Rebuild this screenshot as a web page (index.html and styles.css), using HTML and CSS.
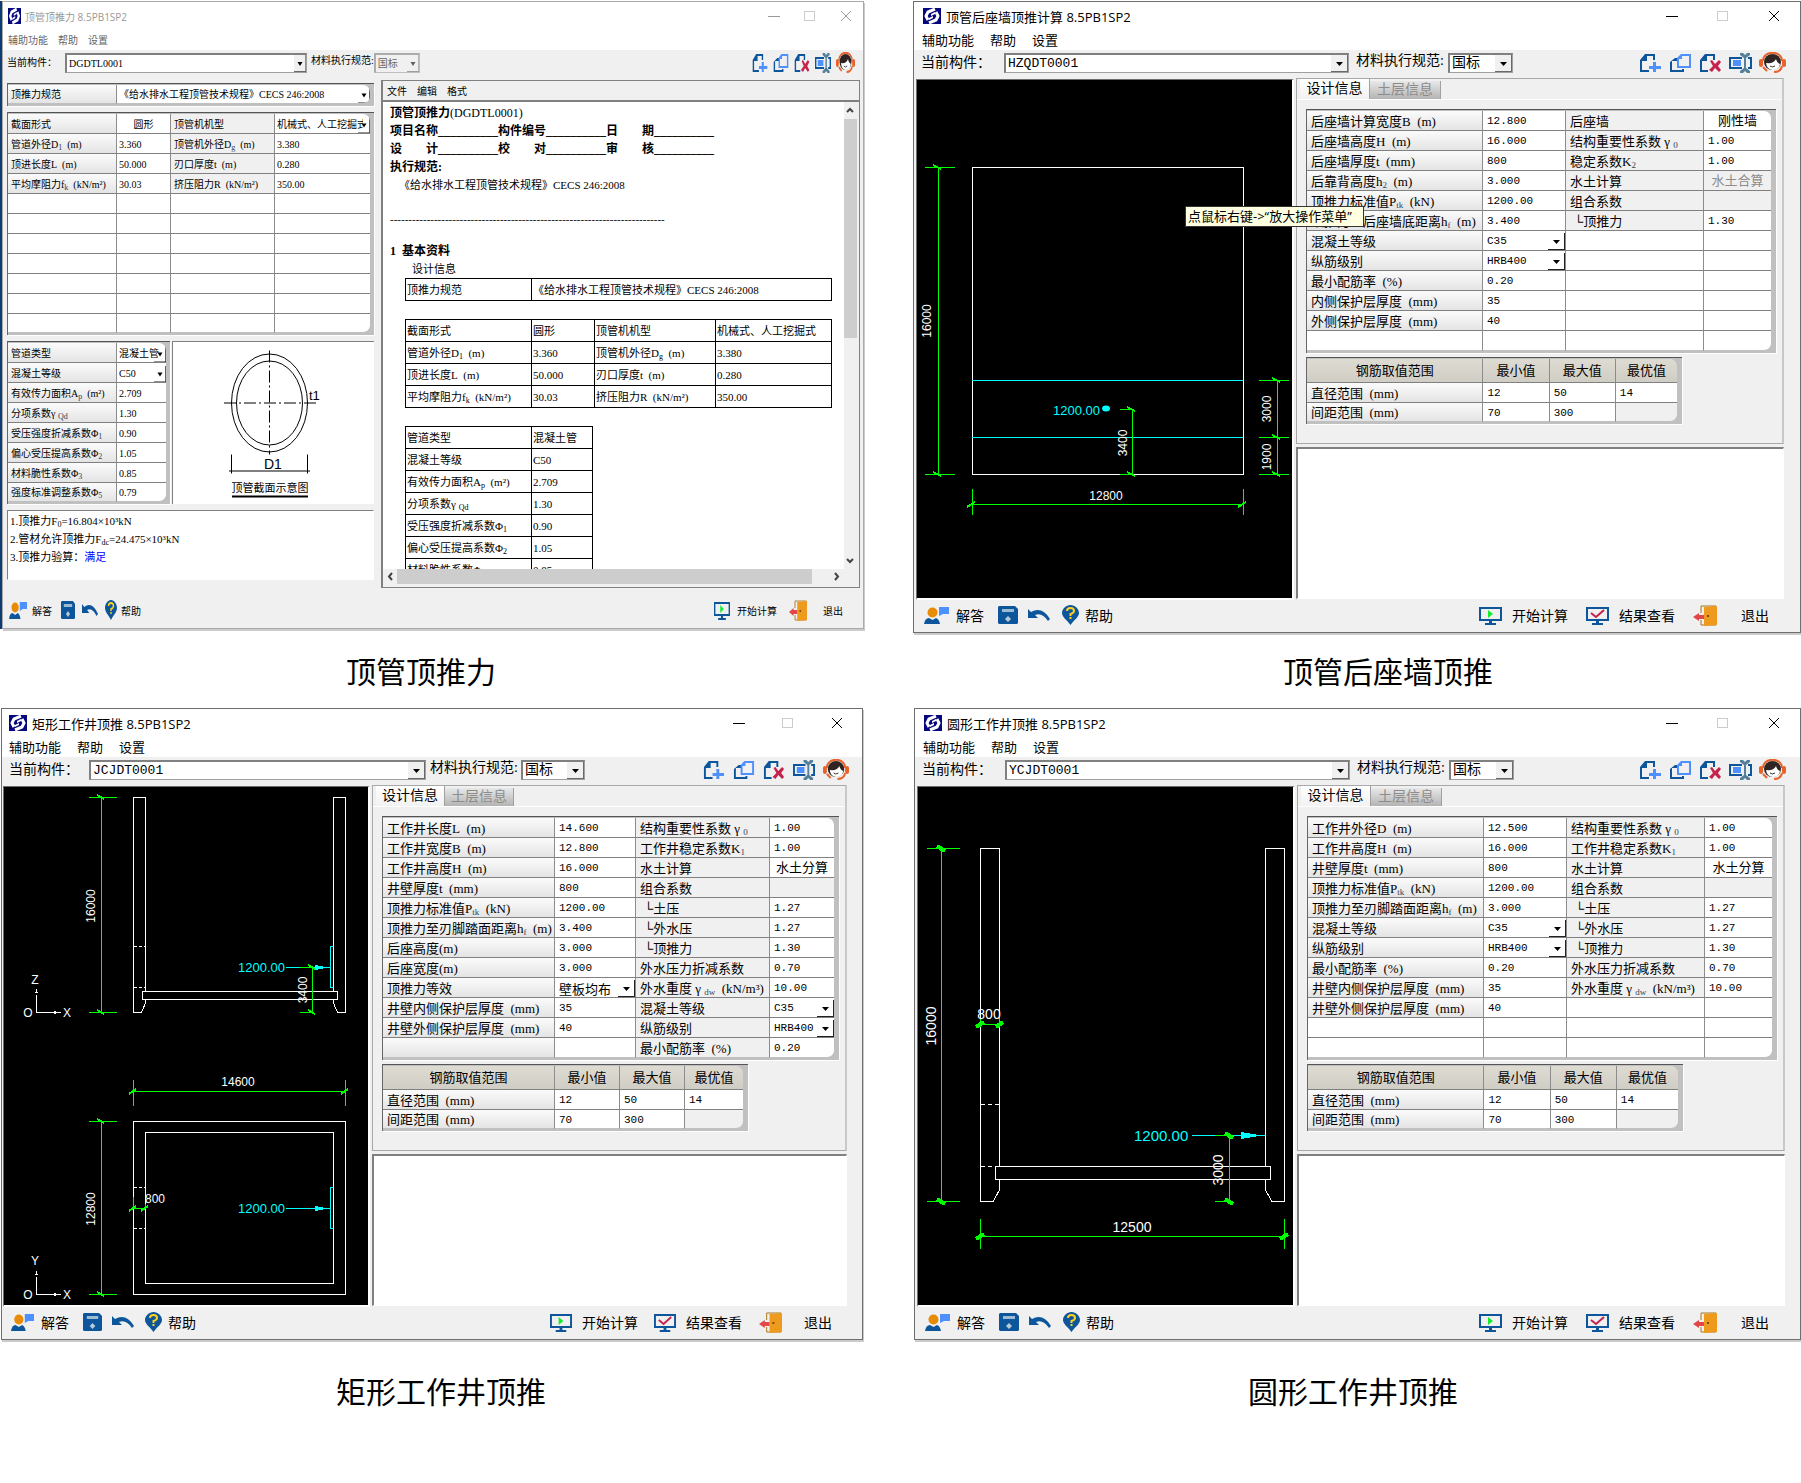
FILE: index.html
```html
<!DOCTYPE html>
<html lang="zh-CN">
<head>
<meta charset="utf-8">
<title>顶管顶推计算</title>
<link rel="stylesheet" href="styles.css">
</head>
<body>
<svg class="sprite" aria-hidden="true">
  <symbol id="logo" viewBox="0 0 18 16" preserveAspectRatio="none"><rect width="18" height="16" fill="#06067e"/><path d="M12 1L5 4L3 8L5 12M6 15L13 12L15 8L13 4" fill="none" stroke="#fff" stroke-width="3"/><path d="M12 4L8 6V8L12 6ZM10 8L6 10V12L10 10Z" fill="#fff"/></symbol>
  <symbol id="add" viewBox="0 0 23 20" preserveAspectRatio="none"><path d="M6 1H16V7H14V3H8V8H3V17H10V19H1V7Z" fill="#0d569c"/><path d="M14 9H17V13H22V16H17V19H14V16H10V13H14Z" fill="#4d90fe"/></symbol>
  <symbol id="copy" viewBox="0 0 23 20" preserveAspectRatio="none"><path d="M6 5H9V8H3V17H13V16H15V19H1V9Z" fill="#0d569c"/><path d="M12 1H22V15H8V5Z M13 3V6H10V13H20V3Z" fill="#4d90fe" fill-rule="evenodd"/></symbol>
  <symbol id="del" viewBox="0 0 23 20" preserveAspectRatio="none"><path d="M6 1H16V7H14V3H8V8H3V17H9V19H1V7Z" fill="#0d569c"/><path d="M11 8L13 7L16 11L20 7L22 9L19 13L22 17L20 19L16 15L13 19L10 17L14 13Z" fill="#c5224c"/></symbol>
  <symbol id="rename" viewBox="0 0 23 20" preserveAspectRatio="none"><path d="M0 4H13V6H2V14H13V16H0Z M19 4H23V16H19V14H21V6H19Z" fill="#0d569c"/><rect x="4" y="7" width="8" height="6" fill="#4d90fe"/><path d="M11 0H14L16 2L18 0H21V2L17 5V15L21 18V20H18L16 18L14 20H11V18L15 15V5L11 2Z" fill="#54809a"/></symbol>
  <symbol id="service" viewBox="0 0 27 21" preserveAspectRatio="none"><path d="M4 9C4 -2 23 -2 23 9" fill="none" stroke="#e8622a" stroke-width="2"/><rect x="0" y="7" width="4" height="8" rx="2" fill="#e8622a"/><rect x="23" y="7" width="4" height="8" rx="2" fill="#e8622a"/><ellipse cx="13.500" cy="10" rx="8.500" ry="8" fill="#2e2523"/><path d="M7 11Q15 12 17 7Q18 11 21 12Q20 18 14 18Q8 18 7 11Z" fill="#fff"/><path d="M11 14Q13 16 16 14" stroke="#333" fill="none"/><path d="M23 14Q22 20 15 20" fill="none" stroke="#e8622a" stroke-width="2"/><path d="M4 15L8 19" stroke="#e8622a" stroke-width="2"/></symbol>
  <symbol id="ask" viewBox="0 0 25 18" preserveAspectRatio="none"><circle cx="8.500" cy="6.500" r="5" fill="#e88b05"/><path d="M0 18Q1 12 5 12L8.500 14L12 12Q15 13 16 18Z" fill="#0d569c"/><path d="M15 1H25V8H19L15 10Z" fill="#4d90fe"/></symbol>
  <symbol id="save" viewBox="0 0 20 18" preserveAspectRatio="none"><path d="M1 0H17L20 3V17L19 18H1L0 17V1Z" fill="#0d569c"/><rect x="4" y="3" width="12" height="3" fill="#9dbbd2"/><path d="M10 10L13 13L10 16L7 13Z" fill="#b9cbd8"/></symbol>
  <symbol id="undo" viewBox="0 0 22 14" preserveAspectRatio="none"><path d="M0 1L3 4Q14 -2 22 11L20 13Q14 4 7 7L10 10H0Z" fill="#0d569c"/></symbol>
  <symbol id="help" viewBox="0 0 17 20" preserveAspectRatio="none"><path d="M8.500 0C13 0 17 4 17 8C17 12 12 15 8.500 20C5 15 0 12 0 8C0 4 4 0 8.500 0Z" fill="#0d569c"/><path d="M5 6Q5 3 8.500 3Q12 3 12 6Q12 8 8.500 9V11" fill="none" stroke="#ffd21c" stroke-width="2"/><rect x="7.500" y="12" width="2" height="2" fill="#ffd21c"/></symbol>
  <symbol id="run" viewBox="0 0 23 19" preserveAspectRatio="none"><path d="M0 1H23V15H0Z M2 3V13H21V3Z M10 15H13V17H17V19H6V17H10Z" fill="#0d569c" fill-rule="evenodd"/><path d="M9 4L14 8L9 12Z" fill="#12ec2e"/></symbol>
  <symbol id="view" viewBox="0 0 23 19" preserveAspectRatio="none"><path d="M0 1H23V15H0Z M2 3V13H21V3Z M10 15H13V17H17V19H6V17H10Z" fill="#0d569c" fill-rule="evenodd"/><path d="M5 7L10 11L18 4" fill="none" stroke="#c5224c" stroke-width="2"/></symbol>
  <symbol id="exit" viewBox="0 0 24 21" preserveAspectRatio="none"><path d="M8 8V1H23V20H8V15" fill="none" stroke="#a8741c" stroke-width="1"/><path d="M11 2L24 1V20L11 21Z" fill="#ee9a1c"/><rect x="14" y="10" width="2" height="2" fill="#7c4a06"/><path d="M0 12L6 8V10H11V14H6V16Z" fill="#e24646"/></symbol>
  <symbol id="wmin" viewBox="0 0 12 12"><path d="M0 6.500H12" stroke="currentColor"/></symbol>
  <symbol id="wmax" viewBox="0 0 12 12"><rect x="0.500" y="1.500" width="10" height="9" fill="none" stroke="#ccc"/></symbol>
  <symbol id="wclose" viewBox="0 0 12 12"><path d="M1 1L11 11M11 1L1 11" stroke="currentColor"/></symbol>
</svg>

<main class="board">
  <figure class="shot">
    <section class="window narrow inactive">
      <header class="titlebar"><svg class="logo"><use href="#logo"/></svg><h2>顶管顶推力 8.5PB1SP2</h2>
        <div class="winbtns"><button aria-label="最小化"><svg><use href="#wmin"/></svg></button><button aria-label="最大化"><svg><use href="#wmax"/></svg></button><button aria-label="关闭"><svg><use href="#wclose"/></svg></button></div></header>
      <nav class="menu"><button>辅助功能</button><button>帮助</button><button>设置</button></nav>
      <div class="toolbar"><label for="m1">当前构件：</label><select id="m1" class="combo member"><option>DGDTL0001</option></select>
        <label for="s1" class="std">材料执行规范:</label><select id="s1" class="combo code" disabled><option>国标</option></select>
        <div class="tools"><button aria-label="新建"><svg><use href="#add"/></svg></button><button aria-label="复制"><svg><use href="#copy"/></svg></button><button aria-label="删除"><svg><use href="#del"/></svg></button><button aria-label="重命名"><svg><use href="#rename"/></svg></button><button aria-label="客服" class="svc"><svg><use href="#service"/></svg></button></div></div>
      <div class="body split">
        <div class="inputs">
          <div class="gridbox"><table class="cells"><colgroup><col class="n-label"><col class="n-wide"></colgroup>
            <tr><th>顶推力规范</th><td><select aria-label="顶推力规范"><option>《给水排水工程顶管技术规程》CECS 246:2008</option></select></td></tr></table></div>
          <div class="gridbox"><table class="cells"><colgroup><col class="n-label"><col class="n-val"><col class="n-label2"><col class="n-val2"></colgroup>
            <tr><th>截面形式</th><td class="mid">圆形</td><th class="flat">顶管机机型</th><td><select aria-label="顶管机机型"><option>机械式、人工挖掘式</option></select></td></tr>
            <tr><th>管道外径D<sub>1</sub>&nbsp; (m)</th><td>3.360</td><th class="flat">顶管机外径D<sub>g</sub>&nbsp; (m)</th><td>3.380</td></tr>
            <tr><th>顶进长度L&nbsp; (m)</th><td>50.000</td><th class="flat">刃口厚度t&nbsp; (m)</th><td>0.280</td></tr>
            <tr><th>平均摩阻力f<sub>k</sub>&nbsp; (kN/m²)</th><td>30.03</td><th class="flat">挤压阻力R&nbsp; (kN/m²)</th><td>350.00</td></tr>
            <tr><td></td><td></td><td></td><td></td></tr><tr><td></td><td></td><td></td><td></td></tr><tr><td></td><td></td><td></td><td></td></tr><tr><td></td><td></td><td></td><td></td></tr><tr><td></td><td></td><td></td><td></td></tr><tr><td></td><td></td><td></td><td></td></tr><tr><td></td><td></td><td></td><td></td></tr></table></div>
          <div class="pipe">
            <div class="gridbox"><table class="cells"><colgroup><col class="n-label"><col class="n-short"></colgroup>
              <tr><th>管道类型</th><td><select aria-label="管道类型"><option>混凝土管</option></select></td></tr>
              <tr><th>混凝土等级</th><td><select aria-label="混凝土等级"><option>C50</option></select></td></tr>
              <tr><th>有效传力面积A<sub>p</sub>&nbsp; (m²)</th><td>2.709</td></tr>
              <tr><th>分项系数γ&nbsp;<sub>Qd</sub></th><td>1.30</td></tr>
              <tr><th>受压强度折减系数Φ<sub>1</sub></th><td>0.90</td></tr>
              <tr><th>偏心受压提高系数Φ<sub>2</sub></th><td>1.05</td></tr>
              <tr><th>材料脆性系数Φ<sub>3</sub></th><td>0.85</td></tr>
              <tr><th>强度标准调整系数Φ<sub>5</sub></th><td>0.79</td></tr></table></div>
            <svg class="section" viewBox="173 340 201 161">
              <g fill="none" stroke="#000"><ellipse cx="269.500" cy="400.500" rx="38" ry="49"/><ellipse cx="269.500" cy="400.500" rx="33" ry="42"/>
              <path d="M224 400.500H316M269.500 348V452" stroke-dasharray="12 3 2 3"/><path d="M231.500 452V471M307.500 452V471M229 468.500H310"/></g>
              <path d="M232 493H308V495H232Z"/>
              <text x="309" y="397" font-size="13">t1</text><text x="264" y="466" font-size="14">D1</text><text x="270" y="489" font-size="11" text-anchor="middle">顶管截面示意图</text>
            </svg>
          </div>
          <div class="result"><p>1.顶推力F<sub>0</sub>=16.804×10³kN</p><p>2.管材允许顶推力F<sub>dc</sub>=24.475×10³kN</p><p>3.顶推力验算：<a href="#s1">满足</a></p></div>
        </div>
        <div class="report">
          <nav class="menu"><button>文件</button><button>编辑</button><button>格式</button></nav>
          <div class="scroller">
            <article class="doc">
              <p><b>顶管顶推力</b><span class="big">(DGDTL0001)</span></p>
              <p><b>项目名称__________构件编号__________日　　期__________</b></p>
              <p><b>设　　计__________校　　对__________审　　核__________</b></p>
              <p><b>执行规范:</b></p>
              <p class="in1">《给水排水工程顶管技术规程》CECS 246:2008</p>
              <p class="rule">---------------------------------------------------------------------------</p>
              <h3>1&nbsp; 基本资料</h3>
              <p class="in2">设计信息</p>
              <table><colgroup><col class="r-label"><col></colgroup><tr><td>顶推力规范</td><td>《给水排水工程顶管技术规程》CECS 246:2008</td></tr></table>
              <table><colgroup><col class="r-label"><col class="r-val"><col class="r-label2"><col></colgroup>
                <tr><td>截面形式</td><td>圆形</td><td>顶管机机型</td><td>机械式、人工挖掘式</td></tr>
                <tr><td>管道外径D<sub>1</sub>&nbsp; (m)</td><td>3.360</td><td>顶管机外径D<sub>g</sub>&nbsp; (m)</td><td>3.380</td></tr>
                <tr><td>顶进长度L&nbsp; (m)</td><td>50.000</td><td>刃口厚度t&nbsp; (m)</td><td>0.280</td></tr>
                <tr><td>平均摩阻力f<sub>k</sub>&nbsp; (kN/m²)</td><td>30.03</td><td>挤压阻力R&nbsp; (kN/m²)</td><td>350.00</td></tr></table>
              <table class="half"><colgroup><col class="r-label"><col></colgroup>
                <tr><td>管道类型</td><td>混凝土管</td></tr><tr><td>混凝土等级</td><td>C50</td></tr><tr><td>有效传力面积A<sub>p</sub>&nbsp; (m²)</td><td>2.709</td></tr><tr><td>分项系数γ&nbsp;<sub>Qd</sub></td><td>1.30</td></tr><tr><td>受压强度折减系数Φ<sub>1</sub></td><td>0.90</td></tr><tr><td>偏心受压提高系数Φ<sub>2</sub></td><td>1.05</td></tr><tr><td>材料脆性系数Φ<sub>3</sub></td><td>0.85</td></tr></table>
            </article>
            <div class="vbar"><svg viewBox="0 0 12 17"><path d="M3 10L6 7L9 10" /></svg><i></i><svg viewBox="0 0 12 17"><path d="M3 7L6 10L9 7"/></svg></div>
            <div class="hbar"><svg viewBox="0 0 14 15"><path d="M9 4L6 7.500L9 11"/></svg><i></i><svg viewBox="0 0 14 15"><path d="M5 4L8 7.500L5 11"/></svg></div>
          </div>
        </div>
      </div>
      <footer class="actions"><button><svg class="i-ask"><use href="#ask"/></svg>解答</button><button aria-label="保存"><svg class="i-save"><use href="#save"/></svg></button><button aria-label="撤销"><svg class="i-undo"><use href="#undo"/></svg></button><button class="b-help"><svg class="i-help"><use href="#help"/></svg>帮助</button>
        <button class="push"><svg class="i-run"><use href="#run"/></svg>开始计算</button><button class="b-exit"><svg class="i-exit"><use href="#exit"/></svg>退出</button></footer>
    </section>
    <figcaption class="cap-a">顶管顶推力</figcaption>
  </figure>

  <figure class="shot">
    <section class="window">
      <header class="titlebar"><svg class="logo"><use href="#logo"/></svg><h2>顶管后座墙顶推计算 8.5PB1SP2</h2>
        <div class="winbtns"><button aria-label="最小化"><svg><use href="#wmin"/></svg></button><button aria-label="最大化"><svg><use href="#wmax"/></svg></button><button aria-label="关闭"><svg><use href="#wclose"/></svg></button></div></header>
      <nav class="menu"><button>辅助功能</button><button>帮助</button><button>设置</button></nav>
      <div class="toolbar"><label for="m2">当前构件：</label><select id="m2" class="combo member"><option>HZQDT0001</option></select>
        <label for="s2" class="std">材料执行规范:</label><select id="s2" class="combo code"><option>国标</option></select>
        <div class="tools"><button aria-label="新建"><svg><use href="#add"/></svg></button><button aria-label="复制"><svg><use href="#copy"/></svg></button><button aria-label="删除"><svg><use href="#del"/></svg></button><button aria-label="重命名"><svg><use href="#rename"/></svg></button><button aria-label="客服" class="svc"><svg><use href="#service"/></svg></button></div></div>
      <div class="body">
        <div class="canvas"><svg viewBox="917 80 375 518">
          <g class="w"><path d="M972.500 167.500H1243.500V474.500H972.500Z"/></g>
          <g class="c"><path d="M972 380.500H1243M972 437.500H1243"/></g>
          <g class="g"><path d="M938.500 167V475M925 167.500H955M925 474.500H955M1277.500 380V475M1259 380.500H1289M1259 437.500H1289M1259 474.500H1289M1120 409.500H1133M1120 474.500H1133M1132.500 409V475M972 504.500H1243M972.500 489V515M1243.500 489V515"/>
          <path class="t" d="M933 165L941 169M933 472L941 476M1272 378L1280 382M1272 435L1280 439M1272 472L1280 476M1127 407L1135 411M1127 472L1135 476M967 507L975 502M1238 507L1246 502"/></g>
          <ellipse cx="1106" cy="408.500" rx="4" ry="3" fill="#0ff"/>
          <text class="ct" x="1053" y="415" font-size="13">1200.00</text>
          <g class="wt" font-size="12"><text transform="translate(931 321) rotate(-90)">16000</text><text transform="translate(1127 443) rotate(-90)">3400</text><text transform="translate(1271 409) rotate(-90)">3000</text><text transform="translate(1271 457) rotate(-90)">1900</text><text x="1106" y="500">12800</text></g>
        </svg></div>
        <div class="side">
          <div class="tabpanel">
            <div class="tabs" role="tablist"><button role="tab" aria-selected="true">设计信息</button><button role="tab" aria-selected="false">土层信息</button></div>
            <div class="page">
              <div class="gridbox"><table class="cells"><colgroup><col class="c-label"><col class="c-val"><col class="c-label2"><col class="c-val2"></colgroup>
                <tr><th>后座墙计算宽度B&nbsp; (m)</th><td>12.800</td><th class="flat">后座墙</th><td class="mid">刚性墙</td></tr>
                <tr><th>后座墙高度H&nbsp; (m)</th><td>16.000</td><th class="flat">结构重要性系数&nbsp;γ&nbsp;<sub>0</sub></th><td>1.00</td></tr>
                <tr><th>后座墙厚度t&nbsp; (mm)</th><td>800</td><th class="flat">稳定系数K<sub>2</sub></th><td>1.00</td></tr>
                <tr><th>后靠背高度h<sub>2</sub>&nbsp; (m)</th><td>3.000</td><th class="flat">水土计算</th><td class="mid off">水土合算</td></tr>
                <tr><th>顶推力标准值P<sub>tk</sub>&nbsp; (kN)</th><td>1200.00</td><th class="flat">组合系数</th><td class="off"></td></tr>
                <tr><th>顶推力至后座墙底距离h<sub>f</sub>&nbsp; (m)</th><td>3.400</td><th class="flat sub">└顶推力</th><td>1.30</td></tr>
                <tr><th>混凝土等级</th><td><select aria-label="混凝土等级"><option>C35</option></select></td><td></td><td></td></tr>
                <tr><th>纵筋级别</th><td><select aria-label="纵筋级别"><option>HRB400</option></select></td><td></td><td></td></tr>
                <tr><th>最小配筋率&nbsp; (%)</th><td>0.20</td><td></td><td></td></tr>
                <tr><th>内侧保护层厚度&nbsp; (mm)</th><td>35</td><td></td><td></td></tr>
                <tr><th>外侧保护层厚度&nbsp; (mm)</th><td>40</td><td></td><td></td></tr>
                <tr><td></td><td></td><td></td><td></td></tr></table></div>
              <div class="gridbox range"><table class="cells"><colgroup><col class="c-label"><col class="c-rng"><col class="c-rng"><col class="c-opt"></colgroup>
                <tr class="head"><th>钢筋取值范围</th><th>最小值</th><th>最大值</th><th>最优值</th></tr>
                <tr><th>直径范围&nbsp; (mm)</th><td>12</td><td>50</td><td>14</td></tr><tr><th>间距范围&nbsp; (mm)</th><td>70</td><td>300</td><td class="off"></td></tr></table></div>
            </div>
          </div>
          <div class="output"></div>
        </div>
        <div class="tip" role="tooltip">点鼠标右键-&gt;“放大操作菜单”</div>
      </div>
      <footer class="actions"><button><svg class="i-ask"><use href="#ask"/></svg>解答</button><button aria-label="保存"><svg class="i-save"><use href="#save"/></svg></button><button aria-label="撤销"><svg class="i-undo"><use href="#undo"/></svg></button><button class="b-help"><svg class="i-help"><use href="#help"/></svg>帮助</button>
        <button class="push"><svg class="i-run"><use href="#run"/></svg>开始计算</button><button class="b-view"><svg class="i-run"><use href="#view"/></svg>结果查看</button><button class="b-exit"><svg class="i-exit"><use href="#exit"/></svg>退出</button></footer>
    </section>
    <figcaption class="cap-b">顶管后座墙顶推</figcaption>
  </figure>

  <figure class="shot">
    <section class="window medium">
      <header class="titlebar"><svg class="logo"><use href="#logo"/></svg><h2>矩形工作井顶推 8.5PB1SP2</h2>
        <div class="winbtns"><button aria-label="最小化"><svg><use href="#wmin"/></svg></button><button aria-label="最大化"><svg><use href="#wmax"/></svg></button><button aria-label="关闭"><svg><use href="#wclose"/></svg></button></div></header>
      <nav class="menu"><button>辅助功能</button><button>帮助</button><button>设置</button></nav>
      <div class="toolbar"><label for="m3">当前构件：</label><select id="m3" class="combo member"><option>JCJDT0001</option></select>
        <label for="s3" class="std">材料执行规范:</label><select id="s3" class="combo code"><option>国标</option></select>
        <div class="tools"><button aria-label="新建"><svg><use href="#add"/></svg></button><button aria-label="复制"><svg><use href="#copy"/></svg></button><button aria-label="删除"><svg><use href="#del"/></svg></button><button aria-label="重命名"><svg><use href="#rename"/></svg></button><button aria-label="客服" class="svc"><svg><use href="#service"/></svg></button></div></div>
      <div class="body">
        <div class="canvas"><svg viewBox="4 787 364 518">
          <g class="w"><path d="M145.500 991V797.500H133.500V1012.500H141.500L145.500 1003V1000M333.500 991V797.500H345.500V1012.500H337.500L333.500 1003V1000M142.500 991.500H337.500V999.500H142.500Z"/>
          <path stroke-dasharray="3 2" d="M134 946.500H145M134 987.500H145M134 1187.500H145M134 1228.500H145"/>
          <path d="M133.500 1121.500H345.500V1294.500H133.500ZM145.500 1132.500H333.500V1283.500H145.500Z"/>
          <path d="M36.500 995V1012.500H55M36.500 1277V1294.500H55"/></g>
          <path fill="#fff" d="M54 1011L61 1012.500L54 1014ZM54 1293L61 1294.500L54 1296ZM35 993L36.500 989L38 993ZM35 1275L36.500 1271L38 1275Z"/>
          <g class="c"><path d="M333 946.500H330.500V987.500H333M333 1187.500H330.500V1228.500H333M286 967.500H330M286 1208.500H330"/></g>
          <path fill="#0ff" d="M315 965L329 967.500L315 970ZM315 1206L329 1208.500L315 1211Z"/>
          <g class="g"><path d="M101.500 797V1013M89 797.500H117M89 1012.500H117M300 967.500H313M300 1012.500H313M312.500 967V1013M133 1091.500H346M133.500 1080V1106M345.500 1080V1106M101.500 1121V1295M89 1121.500H117M89 1294.500H117M133 1208.500H146M133.500 1197V1209M145.500 1204V1209"/>
          <path class="t" d="M97 795L104 799M97 1010L104 1014M308 965L315 969M308 1010L315 1014M129 1094L136 1089M341 1094L348 1089M97 1119L104 1123M97 1292L104 1296M129 1211L136 1206M141 1211L148 1206"/></g>
          <g class="ct" font-size="13"><text x="238" y="972">1200.00</text><text x="238" y="1213">1200.00</text></g>
          <g class="wt" font-size="12"><text transform="translate(95 906) rotate(-90)">16000</text><text transform="translate(307 990) rotate(-90)">3400</text><text transform="translate(95 1209) rotate(-90)">12800</text><text x="238" y="1086">14600</text><text x="155" y="1203">800</text><text x="35" y="984">Z</text><text x="28" y="1017">O</text><text x="67" y="1017">X</text><text x="35" y="1265">Y</text><text x="28" y="1299">O</text><text x="67" y="1299">X</text></g>
        </svg></div>
        <div class="side">
          <div class="tabpanel">
            <div class="tabs" role="tablist"><button role="tab" aria-selected="true">设计信息</button><button role="tab" aria-selected="false">土层信息</button></div>
            <div class="page">
              <div class="gridbox"><table class="cells"><colgroup><col class="c-label"><col class="c-val"><col class="c-label2"><col class="c-val2"></colgroup>
                <tr><th>工作井长度L&nbsp; (m)</th><td>14.600</td><th class="flat">结构重要性系数&nbsp;γ&nbsp;<sub>0</sub></th><td>1.00</td></tr>
                <tr><th>工作井宽度B&nbsp; (m)</th><td>12.800</td><th class="flat">工作井稳定系数K<sub>1</sub></th><td>1.00</td></tr>
                <tr><th>工作井高度H&nbsp; (m)</th><td>16.000</td><th class="flat">水土计算</th><td class="mid">水土分算</td></tr>
                <tr><th>井壁厚度t&nbsp; (mm)</th><td>800</td><th class="flat">组合系数</th><td class="off"></td></tr>
                <tr><th>顶推力标准值P<sub>tk</sub>&nbsp; (kN)</th><td>1200.00</td><th class="flat sub">└土压</th><td>1.27</td></tr>
                <tr><th>顶推力至刃脚踏面距离h<sub>f</sub>&nbsp; (m)</th><td>3.400</td><th class="flat sub">└外水压</th><td>1.27</td></tr>
                <tr><th>后座高度(m)</th><td>3.000</td><th class="flat sub">└顶推力</th><td>1.30</td></tr>
                <tr><th>后座宽度(m)</th><td>3.000</td><th class="flat">外水压力折减系数</th><td>0.70</td></tr>
                <tr><th>顶推力等效</th><td><select class="cjk" aria-label="顶推力等效"><option>壁板均布</option></select></td><th class="flat">外水重度&nbsp;γ&nbsp;<sub>dw</sub>&nbsp; (kN/m³)</th><td>10.00</td></tr>
                <tr><th>井壁内侧保护层厚度&nbsp; (mm)</th><td>35</td><th class="flat">混凝土等级</th><td><select aria-label="混凝土等级"><option>C35</option></select></td></tr>
                <tr><th>井壁外侧保护层厚度&nbsp; (mm)</th><td>40</td><th class="flat">纵筋级别</th><td><select aria-label="纵筋级别"><option>HRB400</option></select></td></tr>
                <tr><th></th><td></td><th class="flat">最小配筋率&nbsp; (%)</th><td>0.20</td></tr></table></div>
              <div class="gridbox range"><table class="cells"><colgroup><col class="c-label"><col class="c-rng"><col class="c-rng"><col class="c-opt"></colgroup>
                <tr class="head"><th>钢筋取值范围</th><th>最小值</th><th>最大值</th><th>最优值</th></tr>
                <tr><th>直径范围&nbsp; (mm)</th><td>12</td><td>50</td><td>14</td></tr><tr><th>间距范围&nbsp; (mm)</th><td>70</td><td>300</td><td class="off"></td></tr></table></div>
            </div>
          </div>
          <div class="output"></div>
        </div>
      </div>
      <footer class="actions"><button><svg class="i-ask"><use href="#ask"/></svg>解答</button><button aria-label="保存"><svg class="i-save"><use href="#save"/></svg></button><button aria-label="撤销"><svg class="i-undo"><use href="#undo"/></svg></button><button class="b-help"><svg class="i-help"><use href="#help"/></svg>帮助</button>
        <button class="push"><svg class="i-run"><use href="#run"/></svg>开始计算</button><button class="b-view"><svg class="i-run"><use href="#view"/></svg>结果查看</button><button class="b-exit"><svg class="i-exit"><use href="#exit"/></svg>退出</button></footer>
    </section>
    <figcaption class="cap-c">矩形工作井顶推</figcaption>
  </figure>

  <figure class="shot">
    <section class="window inset">
      <header class="titlebar"><svg class="logo"><use href="#logo"/></svg><h2>圆形工作井顶推 8.5PB1SP2</h2>
        <div class="winbtns"><button aria-label="最小化"><svg><use href="#wmin"/></svg></button><button aria-label="最大化"><svg><use href="#wmax"/></svg></button><button aria-label="关闭"><svg><use href="#wclose"/></svg></button></div></header>
      <nav class="menu"><button>辅助功能</button><button>帮助</button><button>设置</button></nav>
      <div class="toolbar"><label for="m4">当前构件：</label><select id="m4" class="combo member"><option>YCJDT0001</option></select>
        <label for="s4" class="std">材料执行规范:</label><select id="s4" class="combo code"><option>国标</option></select>
        <div class="tools"><button aria-label="新建"><svg><use href="#add"/></svg></button><button aria-label="复制"><svg><use href="#copy"/></svg></button><button aria-label="删除"><svg><use href="#del"/></svg></button><button aria-label="重命名"><svg><use href="#rename"/></svg></button><button aria-label="客服" class="svc"><svg><use href="#service"/></svg></button></div></div>
      <div class="body">
        <div class="canvas"><svg viewBox="918 787 375 518">
          <g class="w"><path d="M999.500 1166V848.500H980.500V1201.500H993L999.500 1190V1180M1265.500 1166V848.500H1284.500V1201.500H1272L1265.500 1190V1180M995.500 1166.500H1270.500V1179.500H995.500Z"/><path stroke-dasharray="4 3" d="M981 1104.500H1000M981 1166.500H995"/></g>
          <g class="c"><path d="M1192 1135.500H1265"/></g><path fill="#0ff" d="M1241 1132L1262 1135.500L1241 1139Z"/>
          <g class="g"><path d="M941.500 848V1202M927 848.500H960M927 1201.500H960M981 1236.500H1285M980.500 1219V1249M1284.500 1219V1249M1215 1135.500H1230M1215 1201.500H1230M1229.500 1135V1202M976 1024.500H1003M980.500 1018V1025M999.500 1014V1025"/>
          <path class="t3" d="M937 846L945 851M937 1199L945 1204M976 1239L984 1234M1280 1239L1288 1234M1225 1133L1233 1138M1225 1199L1233 1204M976 1027L984 1022M996 1027L1003 1022"/></g>
          <text class="ct" x="1134" y="1141" font-size="15">1200.00</text>
          <g class="wt" font-size="14"><text transform="translate(936 1026) rotate(-90)">16000</text><text transform="translate(1223 1170) rotate(-90)">3000</text><text x="1132" y="1232">12500</text><text x="989" y="1019">800</text></g>
        </svg></div>
        <div class="side">
          <div class="tabpanel">
            <div class="tabs" role="tablist"><button role="tab" aria-selected="true">设计信息</button><button role="tab" aria-selected="false">土层信息</button></div>
            <div class="page">
              <div class="gridbox"><table class="cells"><colgroup><col class="c-label"><col class="c-val"><col class="c-label2"><col class="c-val2"></colgroup>
                <tr><th>工作井外径D&nbsp; (m)</th><td>12.500</td><th class="flat">结构重要性系数&nbsp;γ&nbsp;<sub>0</sub></th><td>1.00</td></tr>
                <tr><th>工作井高度H&nbsp; (m)</th><td>16.000</td><th class="flat">工作井稳定系数K<sub>1</sub></th><td>1.00</td></tr>
                <tr><th>井壁厚度t&nbsp; (mm)</th><td>800</td><th class="flat">水土计算</th><td class="mid">水土分算</td></tr>
                <tr><th>顶推力标准值P<sub>tk</sub>&nbsp; (kN)</th><td>1200.00</td><th class="flat">组合系数</th><td class="off"></td></tr>
                <tr><th>顶推力至刃脚踏面距离h<sub>f</sub>&nbsp; (m)</th><td>3.000</td><th class="flat sub">└土压</th><td>1.27</td></tr>
                <tr><th>混凝土等级</th><td><select aria-label="混凝土等级"><option>C35</option></select></td><th class="flat sub">└外水压</th><td>1.27</td></tr>
                <tr><th>纵筋级别</th><td><select aria-label="纵筋级别"><option>HRB400</option></select></td><th class="flat sub">└顶推力</th><td>1.30</td></tr>
                <tr><th>最小配筋率&nbsp; (%)</th><td>0.20</td><th class="flat">外水压力折减系数</th><td>0.70</td></tr>
                <tr><th>井壁内侧保护层厚度&nbsp; (mm)</th><td>35</td><th class="flat">外水重度&nbsp;γ&nbsp;<sub>dw</sub>&nbsp; (kN/m³)</th><td>10.00</td></tr>
                <tr><th>井壁外侧保护层厚度&nbsp; (mm)</th><td>40</td><td></td><td></td></tr>
                <tr><td></td><td></td><td></td><td></td></tr><tr><td></td><td></td><td></td><td></td></tr></table></div>
              <div class="gridbox range"><table class="cells"><colgroup><col class="c-label"><col class="c-rng"><col class="c-rng"><col class="c-opt"></colgroup>
                <tr class="head"><th>钢筋取值范围</th><th>最小值</th><th>最大值</th><th>最优值</th></tr>
                <tr><th>直径范围&nbsp; (mm)</th><td>12</td><td>50</td><td>14</td></tr><tr><th>间距范围&nbsp; (mm)</th><td>70</td><td>300</td><td class="off"></td></tr></table></div>
            </div>
          </div>
          <div class="output"></div>
        </div>
      </div>
      <footer class="actions"><button><svg class="i-ask"><use href="#ask"/></svg>解答</button><button aria-label="保存"><svg class="i-save"><use href="#save"/></svg></button><button aria-label="撤销"><svg class="i-undo"><use href="#undo"/></svg></button><button class="b-help"><svg class="i-help"><use href="#help"/></svg>帮助</button>
        <button class="push"><svg class="i-run"><use href="#run"/></svg>开始计算</button><button class="b-view"><svg class="i-run"><use href="#view"/></svg>结果查看</button><button class="b-exit"><svg class="i-exit"><use href="#exit"/></svg>退出</button></footer>
    </section>
    <figcaption class="cap-d">圆形工作井顶推</figcaption>
  </figure>
</main>
</body>
</html>
```
FILE: styles.css
```css
* { box-sizing: border-box; }
body { margin: 0; background: #fff; color: #000; font-family: "Liberation Serif", "Noto Sans CJK SC", serif; }
h2, h3, p, figure { margin: 0; }
button { border: 0; padding: 0; background: none; font: inherit; color: inherit; display: flex; align-items: center; }
svg { display: block; flex: none; }
.sprite { position: absolute; width: 0; height: 0; }

.board { display: grid; grid-template-columns: 864fr 888fr; column-gap: 49px; padding-top: 1px; }
.shot { display: flex; flex-direction: column; height: 707px; min-width: 0; }
figcaption { flex: 1; text-align: center; font: 30px/44px "Noto Sans CJK SC", sans-serif; padding-top: 15px; }
.cap-a { padding-top: 19px; padding-right: 22px; }
.cap-b { padding-left: 62px; }
.cap-c { padding-top: 28px; padding-left: 18px; }
.cap-d { padding-top: 28px; padding-right: 8px; }

/* window frame */
.window {
  --text: 13px; --bar: 14px; --member: 345px; --code: 65px; --arrow: 17px;
  --tool: 23px; --svc: 27px; --toolgap: 7px; --toolend: 14px; --labelcol: 83px;
  background: #f0f0f0; border: 1px solid #6e6e6e; box-shadow: 1px 2px 0 #cbcbcb; font-size: var(--text);
}
.medium { --member: 337px; --code: 64px; --tool: 22px; --svc: 26px; --toolgap: 8px; --toolend: 13px; --labelcol: 80px; margin: 0 1px; }
.inset { margin-left: 1px; }
.narrow {
  --text: 10px; --bar: 10px; --member: 242px; --code: 46px; --arrow: 12px;
  --tool: 16px; --svc: 19px; --toolgap: 5px; --toolend: 8px; --labelcol: 58px;
  margin-left: 2px; border-color: #aaa; box-shadow: -2px 0 0 #0b3c74, 1px 2px 0 #cbcbcb;
}
.titlebar { display: flex; align-items: center; height: 28px; background: #fff; padding-left: 9px; font-family: "Open Sans", "Noto Sans CJK SC", sans-serif; }
.logo { width: 18px; height: 16px; margin-right: 5px; }
.titlebar h2 { font-size: var(--text); font-weight: 400; white-space: nowrap; }
.winbtns { display: flex; margin-left: auto; gap: 39px; padding-right: 20px; }
.winbtns svg { width: 12px; height: 12px; }
.medium .titlebar, .medium > .menu, .medium .toolbar { padding-left: 7px; }
.medium .winbtns { gap: 37px; padding-right: 19px; }
.narrow .titlebar { padding-left: 5px; }
.narrow .logo { width: 13px; margin-right: 4px; }
.narrow .winbtns { gap: 24px; padding-right: 11px; }
.inactive h2, .inactive .winbtns { color: #999; }
.menu { display: flex; align-items: center; height: 20px; background: #fff; padding-left: 8px; gap: 16px; font-family: "Open Sans", "Noto Sans CJK SC", sans-serif; font-size: var(--text); line-height: 18px; }
.narrow .menu { gap: 10px; padding-left: 5px; }
.inactive > .menu { color: #666; }

.toolbar { display: flex; align-items: center; height: 28px; padding: 0 var(--toolend) 3px 7px; font-size: var(--bar); line-height: 20px; white-space: nowrap; }
.toolbar label { width: var(--labelcol); }
.toolbar .std { width: auto; padding: 0 4px 3px 7px; }
.medium .toolbar .std { padding: 0 3px 3px 4px; }
.narrow .toolbar { padding-left: 4px; }
.narrow .toolbar .std { padding-left: 4px; padding-right: 0; }
select { appearance: none; border-radius: 0; color: #000; margin: 0; }
.combo {
  height: 20px; border: 1px solid #a0a0a0; border-top: 2px solid #808080; border-left: 2px solid #808080; padding: 0 var(--arrow) 0 2px;
  font: var(--text)/17px "Liberation Mono", "Noto Sans CJK SC", monospace;
  background: #fff url("data:image/svg+xml,%3Csvg xmlns='http://www.w3.org/2000/svg' viewBox='0 0 17 17' preserveAspectRatio='none'%3E%3Cpath d='M0 0H17V17H0Z' fill='%23f0f0f0'/%3E%3Cpath d='M16 0H17V17H0V16H16Z' fill='%23696969'/%3E%3Cpath d='M5 7H12L8.500 11Z'/%3E%3C/svg%3E") right center / var(--arrow) 17px no-repeat;
}
.member { flex: 0 1 var(--member); min-width: 0; }
.code { width: var(--code); flex: none; }
.window .code { font-size: var(--bar); }
.narrow .combo { font-family: "Liberation Serif", "Noto Sans CJK SC", serif; }
.combo:disabled { opacity: .6; background-color: #f0f0f0; }
.tools { display: flex; margin-left: auto; gap: var(--toolgap); }
.tools svg { width: var(--tool); height: 20px; }
.tools .svc svg { width: var(--svc); height: 21px; }

/* drawing and input columns */
.body { display: grid; grid-template-columns: 378fr 488fr; gap: 2px; padding: 0 16px 0 2px; position: relative; height: 522px; }
.medium .body { grid-template-columns: 367fr 475fr; padding: 0 15px 0 1px; }
.inset .body { padding-right: 15px; }
.canvas { margin-top: 1px; border: 1px solid #6e6e6e; border-right: 2px solid #fff; border-bottom: 2px solid #fff; background: #000; min-width: 0; }
.canvas svg { width: 100%; height: 100%; }
.canvas path { shape-rendering: crispEdges; }
.w, .c, .g { fill: none; stroke: #fff; }
.c { stroke: #0ff; }
.g { stroke: #0f0; }
.t { stroke-width: 2; }
.t3 { stroke-width: 4; }
.wt, .ct { fill: #fff; font-family: "Liberation Sans", sans-serif; text-anchor: middle; }
.ct { fill: #0ff; text-anchor: start; }
.side { display: flex; flex-direction: column; gap: 3px; min-width: 0; }
.tabpanel { height: 366px; border: 1px solid #a8a8a8; border-right: 2px solid #c8c8c8; }
.tabs { display: flex; align-items: flex-end; height: 21px; font-size: 14px; border-bottom: 1px solid #fff; padding-left: 3px; }
.tabs button { width: 71px; height: 18px; justify-content: center; line-height: 18px; color: #8c8c8c; background: linear-gradient(#e8e8e8, #b4b4b4); border-right: 1px solid #a0a0a0; }
.tabs button[aria-selected="true"] { width: 70px; height: 20px; color: #000; background: linear-gradient(#fff, #f2f2f2); }
.medium .tabs button { width: 69px; }
.page { padding: 9px 6px 0 9px; display: flex; flex-direction: column; gap: 4px; }
.output { flex: 1; background: #fff; border: 2px solid #808080; border-right: 1px solid #fff; border-bottom: 1px solid #fff; margin-bottom: 1px; }

.gridbox { background: #c0c0c0; border-top: 1px solid #555; border-left: 1px solid #666; padding: 1px 5px 2px 0; box-shadow: 1px 1px 0 #fff; }
.range { width: 80%; }
.cells { width: 100%; table-layout: fixed; border-spacing: 0; }
.cells th, .cells td { height: 20px; padding: 2px 0 0 4px; border-right: 1px solid #8c8c8c; border-bottom: 1px solid #808080; line-height: 17px; text-align: left; font-weight: 400; white-space: nowrap; overflow: hidden; }
.cells th { background: linear-gradient(#fbfbfb, #e4e4e4); }
.cells .flat { background: #f0f0f0; }
.cells .sub { padding-left: 8px; }
.cells td { background: #fff; font-family: "Liberation Mono", "Noto Sans CJK SC", monospace; font-size: 11px; }
.cells .mid { font-size: var(--text); text-align: center; padding: 2px 0 0; }
.cells .off { background: #f0f0f0; color: #8c8c8c; }
.cells tr > :last-child { border-right: 0; }
.cells tr:first-child > :last-child { border-top-right-radius: 7px; }
.cells tr:last-child > :last-child { border-bottom-right-radius: 7px; }
.cells tr:last-child > * { border-bottom-color: #c0c0c0; }
.range tr:last-child > * { height: 19px; line-height: 16px; }
.cells .head th { height: 24px; padding: 0; text-align: center; background: linear-gradient(#dedbd3, #d0cdc4); }
.cells sub { font-size: 9px; line-height: 0; vertical-align: -2px; color: #345; }
.cells select {
  display: block; width: 100%; height: 17px; border: 0; padding: 0 16px 0 0; font: inherit; line-height: 17px;
  background: url("data:image/svg+xml,%3Csvg xmlns='http://www.w3.org/2000/svg' viewBox='0 0 17 17' preserveAspectRatio='none'%3E%3Cpath d='M16 0H17V17H0V16H16Z' fill='%23222'/%3E%3Cpath d='M5 7H12L8.500 11Z'/%3E%3C/svg%3E") right center / var(--arrow) 17px no-repeat;
}
.cells .cjk { font-family: "Noto Sans CJK SC", sans-serif; font-size: 13px; }
.c-label { width: 176px; } .c-val { width: 83px; } .c-label2 { width: 138px; } .c-val2 { width: 67px; } .c-rng { width: 66px; } .c-opt { width: 61px; }
.medium .c-label { width: 172px; } .medium .c-val { width: 81px; } .medium .c-label2 { width: 134px; } .medium .c-val2 { width: 64px; } .medium .c-rng { width: 65px; } .medium .c-opt { width: 58px; }
.tip { position: absolute; left: 271px; top: 128px; min-width: 179px; height: 21px; border: 1px solid #333; background: #ffffe1; padding: 0 2px; font: 13px/19px "Open Sans", "Noto Sans CJK SC", sans-serif; white-space: nowrap; }

/* bottom command bar */
.actions { display: flex; align-items: center; height: 32px; padding: 0 31px 2px 10px; gap: 10px; font-size: 14px; white-space: nowrap; }
.actions button { gap: 7px; }
.actions button:first-child { margin-right: 4px; }
.i-ask { width: 25px; height: 18px; } .i-save { width: 20px; height: 18px; } .i-undo { width: 22px; height: 14px; } .i-help { width: 17px; height: 20px; } .i-run { width: 23px; height: 19px; } .i-exit { width: 24px; height: 21px; }
.actions .b-help { gap: 6px; margin-left: 2px; }
.actions .push { margin-left: auto; gap: 10px; }
.actions .b-view { margin-left: 8px; gap: 10px; }
.actions .b-exit { margin-left: 8px; gap: 24px; }
.medium .actions { padding-left: 9px; padding-right: 30px; }
.medium .i-ask, .medium .i-exit { width: 23px; }
.medium .i-save { width: 19px; }
.medium .i-run { width: 22px; }
.medium .actions .b-help { margin-left: 1px; }
.medium .actions .b-view { margin-left: 6px; }
.medium .actions .b-exit { margin-left: 7px; gap: 22px; }

/* jacking-force window */
.narrow .split { grid-template-columns: 367fr 479fr; gap: 7px; padding: 0 3px 0 4px; height: 512px; }
.inputs { display: flex; flex-direction: column; gap: 6px; padding-top: 5px; min-width: 0; }
.narrow .gridbox { padding-right: 4px; }
.narrow .cells th, .narrow .cells td { padding-left: 3px; }
.narrow .cells td { font-family: inherit; font-size: 10px; padding-left: 2px; }
.narrow .cells .mid { padding-left: 0; }
.narrow .cells tr:last-child > * { height: 19px; line-height: 16px; }
.narrow .cells select { padding-right: 7px; height: 16px; line-height: 16px; }
.narrow .cells sub { font-size: 8px; }
.n-label { width: 109px; } .n-wide { width: 253px; } .n-val { width: 54px; } .n-label2 { width: 104px; } .n-val2 { width: 95px; } .n-short { width: 49px; }
.pipe { display: grid; grid-template-columns: 163fr 202fr; gap: 2px; }
.section { width: 100%; height: 100%; background: #fff; border: 1px solid #808080; border-right: 0; border-bottom: 0; font-family: "Liberation Sans", "Noto Sans CJK SC", sans-serif; }
.result { height: 70px; background: #fff; border: 1px solid #808080; border-right-color: #fff; border-bottom-color: #fff; padding: 1px 2px; font-size: 11px; line-height: 18px; }
.result sub, .doc sub { font-size: 8px; line-height: 0; vertical-align: -2px; }
.result a { color: #00f; text-decoration: none; }
.report { margin: 2px 0; border: 1px solid #808080; border-left-width: 2px; min-width: 0; }
.report .menu { height: 21px; background: #f0f0f0; border-bottom: 2px solid #808080; padding-left: 4px; }
.scroller { display: grid; grid-template: 467px 15px / 1fr 13px; padding-right: 2px; }
.doc { background: #fff; overflow: hidden; padding: 2px 12px 0 7px; font-size: 11px; line-height: 18px; }
.doc p { height: 18px; white-space: nowrap; }
.doc b, .doc h3, .doc .big { font-size: 12px; }
.doc .in1 { padding-left: 9px; }
.doc .in2 { padding-left: 22px; }
.doc .rule { margin: 16px 0 14px; }
.doc table { width: 427px; max-width: 100%; margin: 0 0 18px 15px; table-layout: fixed; border-collapse: collapse; }
.doc table.half { width: 188px; }
.doc td { height: 22px; padding: 0 1px; border: 1px solid #000; line-height: 20px; white-space: nowrap; }
.r-label { width: 126px; } .r-val { width: 63px; } .r-label2 { width: 121px; }
.vbar, .hbar { display: flex; background: #f0f0f0; }
.vbar { flex-direction: column; }
.vbar svg { width: 12px; height: 17px; }
.hbar svg { width: 14px; height: 15px; }
.vbar path, .hbar path { fill: none; stroke: #444; stroke-width: 2; }
.vbar i { flex: 0 0 47%; margin-bottom: auto; background: #cdcdcd; }
.hbar i { flex: 0 0 90%; margin-right: auto; background: #cdcdcd; }
.narrow .actions { height: 38px; padding: 2px 20px 0 6px; font-size: 10px; gap: 7px; }
.narrow .actions button { gap: 5px; }
.narrow .actions button:first-child { margin-right: 2px; }
.narrow .actions .b-help { margin-left: 0; gap: 4px; }
.narrow .actions .push { gap: 7px; }
.narrow .actions .b-exit { gap: 16px; margin-left: 5px; }
.narrow .i-ask, .narrow .i-exit { width: 18px; } .narrow .i-save { width: 14px; } .narrow .i-undo { width: 16px; } .narrow .i-help { width: 12px; } .narrow .i-run { width: 16px; }
```
